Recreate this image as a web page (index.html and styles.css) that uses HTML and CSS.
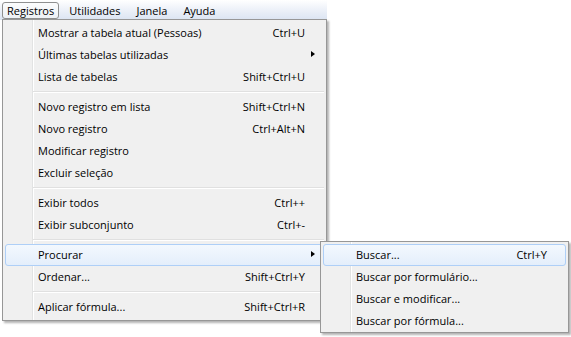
FILE: index.html
```html
<!DOCTYPE html>
<html>
<head>
	<meta charset="utf-8">
	<title>Registros</title>
	<link rel="stylesheet" href="styles.css">
</head>
<body>
	<div class="menubar">
		<div class="top active">Registros</div>
		<div class="top">Utilidades</div>
		<div class="top">Janela</div>
		<div class="top">Ayuda</div>
	</div>

	<div class="menu main">
		<div class="row"><span class="label">Mostrar a tabela atual (Pessoas)</span><span class="key">Ctrl+U</span><span class="arrow"></span></div>
		<div class="row"><span class="label">Últimas tabelas utilizadas</span><span class="key"></span><span class="arrow sub"></span></div>
		<div class="row"><span class="label">Lista de tabelas</span><span class="key">Shift+Ctrl+U</span><span class="arrow"></span></div>
		<div class="sep"></div>
		<div class="row"><span class="label">Novo registro em lista</span><span class="key">Shift+Ctrl+N</span><span class="arrow"></span></div>
		<div class="row"><span class="label">Novo registro</span><span class="key">Ctrl+Alt+N</span><span class="arrow"></span></div>
		<div class="row"><span class="label">Modificar registro</span><span class="key"></span><span class="arrow"></span></div>
		<div class="row"><span class="label">Excluir seleção</span><span class="key"></span><span class="arrow"></span></div>
		<div class="sep"></div>
		<div class="row"><span class="label">Exibir todos</span><span class="key">Ctrl++</span><span class="arrow"></span></div>
		<div class="row"><span class="label">Exibir subconjunto</span><span class="key">Ctrl+-</span><span class="arrow"></span></div>
		<div class="sep"></div>
		<div class="row hot"><span class="label">Procurar</span><span class="key"></span><span class="arrow sub"></span></div>
		<div class="row"><span class="label">Ordenar...</span><span class="key">Shift+Ctrl+Y</span><span class="arrow"></span></div>
		<div class="sep"></div>
		<div class="row"><span class="label">Aplicar fórmula...</span><span class="key">Shift+Ctrl+R</span><span class="arrow"></span></div>
	</div>

	<div class="menu submenu">
		<div class="row hot"><span class="label">Buscar...</span><span class="key">Ctrl+Y</span><span class="arrow"></span></div>
		<div class="row"><span class="label">Buscar por formulário...</span><span class="key"></span><span class="arrow"></span></div>
		<div class="row"><span class="label">Buscar e modificar...</span><span class="key"></span><span class="arrow"></span></div>
		<div class="row"><span class="label">Buscar por fórmula...</span><span class="key"></span><span class="arrow"></span></div>
	</div>
</body>
</html>
```

FILE: styles.css
```css
body {
	margin: 0;
	width: 571px;
	height: 337px;
	background: #ffffff;
	font-family: 'Open Sans', 'Noto Sans', sans-serif;
	font-size: 11px;
	color: #000000;
	position: relative;
	overflow: hidden;
}
.menubar {
	width: 327px;
	height: 20px;
	display: flex;
	align-items: center;
	padding-left: 2px;
	box-sizing: border-box;
	background: linear-gradient(#ffffff, #eef2f9 45%, #dbe4f2);
}
.menubar .top {
	height: 17px;
	line-height: 15px;
	padding: 0 7px;
	border: 1px solid transparent;
	box-sizing: border-box;
}
.menubar .top.active {
	border-color: #8e8f8f;
	border-radius: 3px;
	background: linear-gradient(#fbfcfd, #eef1f5);
	padding: 0 4px;
	margin-right: 2px;
}
.menu {
	position: absolute;
	background: #f0f0f0;
	border: 1px solid #979797;
	padding: 2px;
	box-shadow: 2px 2px 2px rgba(0, 0, 0, 0.3);
	background-image: linear-gradient(to right, transparent 29px, #e2e3e3 29px, #e2e3e3 30px, #ffffff 30px, #ffffff 31px, transparent 31px);
}
.menu.main {
	left: 2px;
	top: 19px;
	width: 319px;
}
.menu.submenu {
	left: 320px;
	top: 241px;
	width: 243px;
	padding-bottom: 0;
}
.row {
	height: 22px;
	display: flex;
	align-items: center;
	padding-left: 32px;
	padding-bottom: 1px;
	border: 1px solid transparent;
	border-radius: 3px;
	box-sizing: border-box;
	white-space: nowrap;
}
.row .label {
	flex: 1;
}
.row .key {
	text-align: right;
}
.row .arrow {
	width: 18px;
	height: 7px;
	position: relative;
}
.row .arrow.sub::after {
	content: '';
	position: absolute;
	left: 6px;
	top: 0;
	border-left: 4px solid #000000;
	border-top: 3.5px solid transparent;
	border-bottom: 3.5px solid transparent;
}
.row.hot {
	border-color: #aecff7;
	background: linear-gradient(#f3f8fe, #e4eefb);
}
.sep {
	height: 8px;
	margin-left: 28px;
	display: flex;
	flex-direction: column;
	justify-content: center;
}
.sep::before {
	content: '';
	height: 1px;
	background: #e0e0e0;
	border-bottom: 1px solid #ffffff;
}
```
